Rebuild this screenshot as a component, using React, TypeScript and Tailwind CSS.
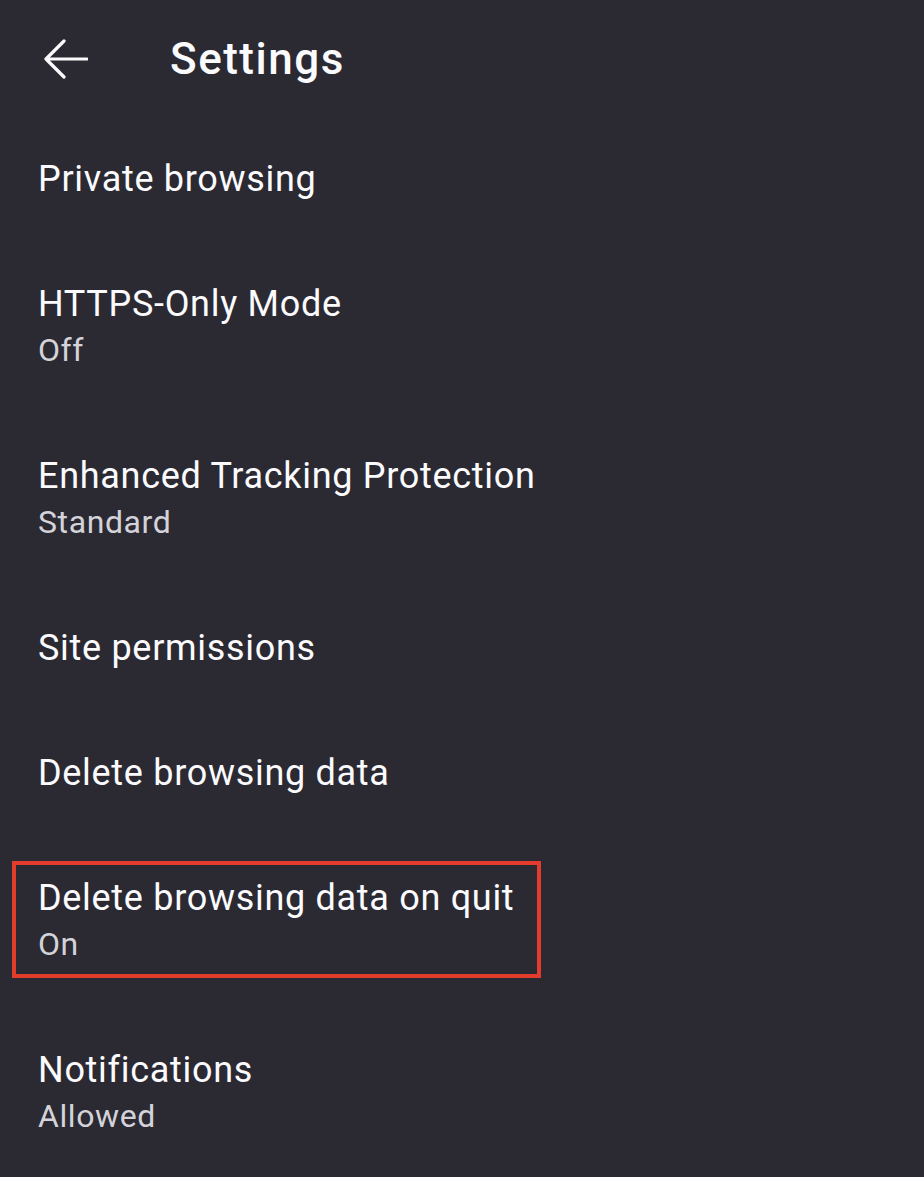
import React from "react";

type Item = { title: string; sub?: string; highlight?: boolean };

const items: Item[] = [
  { title: "Private browsing" },
  { title: "HTTPS-Only Mode", sub: "Off" },
  { title: "Enhanced Tracking Protection", sub: "Standard" },
  { title: "Site permissions" },
  { title: "Delete browsing data" },
  { title: "Delete browsing data on quit", sub: "On", highlight: true },
  { title: "Notifications", sub: "Allowed" },
];

export default function App() {
  return (
    <div
      className="min-h-[1177px] w-full bg-[#2b2a33] text-[#fbfbfe]"
      style={{ fontFamily: "Roboto, 'Noto Sans', sans-serif" }}
    >
      <header className="flex h-[117px] items-center">
        <div className="flex w-[170px] items-center pl-[43px]">
          <svg width="45" height="40" viewBox="0 0 45 40" fill="none">
            <path
              d="M44 20H3M21 2L3 20L21 38"
              stroke="#fbfbfe"
              strokeWidth="3.2"
              strokeLinecap="round"
              strokeLinejoin="round"
            />
          </svg>
        </div>
        <h1 className="text-[44px] font-medium leading-none tracking-[1.5px]">Settings</h1>
      </header>
      <ul>
        {items.map((it) => (
          <li key={it.title} className="relative px-[38px] py-[40px]">
            {it.highlight && (
              <div className="absolute left-[12px] top-[25px] h-[117px] w-[529px] border-[4px] border-[#e33b2e]" />
            )}
            <div className="text-[36px] leading-[45px] tracking-[0.7px]">{it.title}</div>
            {it.sub && (
              <div className="text-[32px] leading-[47px] tracking-[0.6px] text-[#d4d3da]">{it.sub}</div>
            )}
          </li>
        ))}
      </ul>
    </div>
  );
}
